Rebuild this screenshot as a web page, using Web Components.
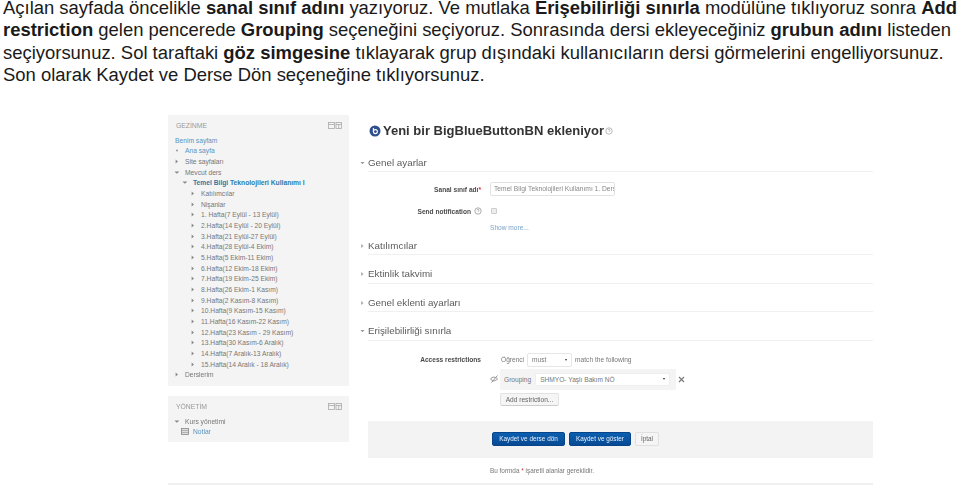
<!DOCTYPE html>
<html lang="tr">
<head>
<meta charset="utf-8">
<title>BigBlueButtonBN</title>
<style>
    html, body { margin: 0; padding: 0; background: #fff; overflow: hidden; }
    body { font-family: "Liberation Sans", Arial, sans-serif; width: 960px; height: 486px; }
</style>
</head>
<body>
<intro-text>Açılan sayfada öncelikle <b>sanal sınıf adını</b> yazıyoruz. Ve mutlaka <b>Erişebilirliği sınırla</b> modülüne tıklıyoruz sonra <b>Add</b><br><b>restriction</b> gelen pencerede <b>Grouping</b> seçeneğini seçiyoruz. Sonrasında dersi ekleyeceğiniz <b>grubun adını</b> listeden<br>seçiyorsunuz. Sol taraftaki <b>göz simgesine</b> tıklayarak grup dışındaki kullanıcıların dersi görmelerini engelliyorsunuz.<br>Son olarak Kaydet ve Derse Dön seçeneğine tıklıyorsunuz.</intro-text>

<moodle-shot>
    <div slot="side">
        <nav-block heading="GEZİNME" style="height:271px">
            <tree-row level="0" arrow="none" link>Benim sayfam</tree-row>
            <tree-row level="1" arrow="dot" link>Ana sayfa</tree-row>
            <tree-row level="1" arrow="right">Site sayfaları</tree-row>
            <tree-row level="1" arrow="down">Mevcut ders</tree-row>
            <tree-row level="2" arrow="down" link strong>Temel Bilgi Teknolojileri Kullanımı I</tree-row>
            <tree-row level="3" arrow="right">Katılımcılar</tree-row>
            <tree-row level="3" arrow="right">Nişanlar</tree-row>
            <tree-row level="3" arrow="right">1. Hafta(7 Eylül - 13 Eylül)</tree-row>
            <tree-row level="3" arrow="right">2.Hafta(14 Eylül - 20 Eylül)</tree-row>
            <tree-row level="3" arrow="right">3.Hafta(21 Eylül-27 Eylül)</tree-row>
            <tree-row level="3" arrow="right">4.Hafta(28 Eylül-4 Ekim)</tree-row>
            <tree-row level="3" arrow="right">5.Hafta(5 Ekim-11 Ekim)</tree-row>
            <tree-row level="3" arrow="right">6.Hafta(12 Ekim-18 Ekim)</tree-row>
            <tree-row level="3" arrow="right">7.Hafta(19 Ekim-25 Ekim)</tree-row>
            <tree-row level="3" arrow="right">8.Hafta(26 Ekim-1 Kasım)</tree-row>
            <tree-row level="3" arrow="right">9.Hafta(2 Kasım-8 Kasım)</tree-row>
            <tree-row level="3" arrow="right">10.Hafta(9 Kasım-15 Kasım)</tree-row>
            <tree-row level="3" arrow="right">11.Hafta(16 Kasım-22 Kasım)</tree-row>
            <tree-row level="3" arrow="right">12.Hafta(23 Kasım - 29 Kasım)</tree-row>
            <tree-row level="3" arrow="right">13.Hafta(30 Kasım-6 Aralık)</tree-row>
            <tree-row level="3" arrow="right">14.Hafta(7 Aralık-13 Aralık)</tree-row>
            <tree-row level="3" arrow="right">15.Hafta(14 Aralık - 18 Aralık)</tree-row>
            <tree-row level="1" arrow="right">Derslerim</tree-row>
        </nav-block>
        <nav-block heading="YÖNETİM" style="height:46px;margin-top:10px">
            <tree-row level="1" arrow="down">Kurs yönetimi</tree-row>
            <tree-row level="2" arrow="grid" link>Notlar</tree-row>
        </nav-block>
    </div>

    <page-title>Yeni bir BigBlueButtonBN ekleniyor</page-title>

    <form-section label="Genel ayarlar" open body="64">
        <field-row label="Sanal sınıf adı" required style="margin-top:10px;height:14px">
            <text-box style="width:125px">Temel Bilgi Teknolojileri Kullanımı 1. Ders</text-box>
        </field-row>
        <field-row label="Send notification" help style="margin-top:9px;height:12px">
            <check-mark></check-mark>
        </field-row>
        <field-row style="margin-top:6px;height:10px">
            <more-link>Show more...</more-link>
        </field-row>
    </form-section>
    <form-section label="Katılımcılar"></form-section>
    <form-section label="Ektinlik takvimi"></form-section>
    <form-section label="Genel eklenti ayarları"></form-section>
    <form-section label="Erişilebilirliği sınırla" open body="80">
        <field-row label="Access restrictions" style="margin-top:12px;height:14px">
            <access-rule></access-rule>
        </field-row>
    </form-section>

    <form-actions>
        <shot-button primary style="width:73px">Kaydet ve derse dön</shot-button>
        <shot-button primary style="width:62px">Kaydet ve göster</shot-button>
        <shot-button style="width:24px">İptal</shot-button>
    </form-actions>
    <form-note></form-note>
</moodle-shot>

<script>
    class IntroText extends HTMLElement {
        connectedCallback() {
            this.attachShadow({ mode: 'open' });
            this.shadowRoot.innerHTML = `
                <style>
                    :host {
                        display: block;
                        height: 90px;
                        margin-top: -3px;
                        padding-left: 3px;
                        font-size: 18.45px;
                        line-height: 22.4px;
                        color: #1a1a1a;
                        white-space: nowrap;
                    }
                </style>
                <slot></slot>
            `;
        }
    }

    class MoodleShot extends HTMLElement {
        connectedCallback() {
            this.attachShadow({ mode: 'open' });
            this.shadowRoot.innerHTML = `
                <style>
                    :host {
                        display: block;
                        width: 705px;
                        margin: 28px 0 0 168px;
                        filter: blur(0.45px);
                    }
                    .cols {
                        display: grid;
                        grid-template-columns: 181px 1fr;
                        column-gap: 11px;
                    }
                    .rule {
                        height: 2px;
                        background: #efefef;
                    }
                </style>
                <div class="cols">
                    <div><slot name="side"></slot></div>
                    <div><slot></slot></div>
                </div>
                <div class="rule"></div>
            `;
        }
    }

    class NavBlock extends HTMLElement {
        connectedCallback() {
            this.attachShadow({ mode: 'open' });
            this.shadowRoot.innerHTML = `
                <style>
                    :host {
                        display: block;
                        box-sizing: border-box;
                        padding-top: 5px;
                        background: #f4f4f4;
                    }
                    .head {
                        display: flex;
                        justify-content: space-between;
                        align-items: center;
                        height: 10px;
                        margin-bottom: 5px;
                        padding: 0 7px 0 8px;
                        font-size: 6.8px;
                        color: #999;
                    }
                    svg { display: block; }
                </style>
                <div class="head">
                    <span>${this.getAttribute('heading')}</span>
                    <svg width="14" height="7" viewBox="0 0 14 7" fill="none" stroke="#aaa" stroke-width="0.8">
                        <rect x="0.5" y="0.5" width="6" height="6"/><path d="M0.5 2.5h6"/>
                        <rect x="8" y="0.5" width="5.5" height="6"/><path d="M8 2.5h5.5M10.7 2.5v4"/>
                    </svg>
                </div>
                <slot></slot>
            `;
        }
    }

    class TreeRow extends HTMLElement {
        connectedCallback() {
            const level = Number(this.getAttribute('level'));
            const arrow = this.getAttribute('arrow');
            const icons = {
                none: '',
                dot: '<circle cx="4" cy="3.5" r="1" fill="#999"/>',
                right: '<path d="M2.6 1.4L5 3.5L2.6 5.6Z" fill="#888"/>',
                down: '<path d="M1.4 2.4H6.4L3.9 4.8Z" fill="#888"/>',
                grid: '<rect x="0.5" y="0.5" width="7" height="6" fill="#ddd" stroke="#888" stroke-width="0.8"/><path d="M0.5 2.5h7M0.5 4.5h7" stroke="#888" stroke-width="0.5"/>'
            };
            this.attachShadow({ mode: 'open' });
            this.shadowRoot.innerHTML = `
                <style>
                    :host {
                        display: flex;
                        align-items: center;
                        height: 10.67px;
                        padding-left: ${arrow === 'none' ? 7 : level * 8 - 3}px;
                        font-size: 6.7px;
                        color: #777;
                        white-space: nowrap;
                    }
                    :host([link]) { color: #5a93c0; }
                    :host([strong]) { font-weight: bold; color: #2f7aa8; }
                    svg { flex: none; width: 8px; height: 7px; margin-right: 4px; }
                </style>
                ${arrow === 'none' ? '' : `<svg viewBox="0 0 8 7">${icons[arrow]}</svg>`}
                <slot></slot>
            `;
        }
    }

    class PageTitle extends HTMLElement {
        connectedCallback() {
            this.attachShadow({ mode: 'open' });
            this.shadowRoot.innerHTML = `
                <style>
                    :host {
                        display: flex;
                        align-items: center;
                        height: 30px;
                        margin-bottom: 8px;
                        padding-left: 8px;
                        font-size: 13px;
                        font-weight: bold;
                        color: #333;
                        white-space: nowrap;
                    }
                    svg { flex: none; display: block; }
                </style>
                <svg width="15" height="13" viewBox="0 0 15 13">
                    <circle cx="7" cy="7" r="5.5" fill="#2f4f8f"/>
                    <circle cx="7.4" cy="7.6" r="2" fill="none" stroke="#fff" stroke-width="1.1"/>
                    <path d="M5.4 4v3.6" stroke="#fff" stroke-width="1.1"/>
                </svg>
                <slot></slot>
                <svg width="8" height="8" viewBox="0 0 8 8" style="margin:2px 0 0 1px" fill="none" stroke="#aaa" stroke-width="0.8">
                    <circle cx="4" cy="4" r="3.2"/><path d="M3 3.2a1 1 0 1 1 1.4 1L4 4.8"/>
                </svg>
            `;
        }
    }

    class FormSection extends HTMLElement {
        connectedCallback() {
            const open = this.hasAttribute('open');
            // collapsed rows are 19 + 9.5 tall, open ones 19 + body
            const total = open ? 19 + Number(this.getAttribute('body')) : 28.5;
            this.attachShadow({ mode: 'open' });
            this.shadowRoot.innerHTML = `
                <style>
                    :host {
                        display: block;
                        height: ${total}px;
                    }
                    .head {
                        display: flex;
                        align-items: center;
                        height: 19px;
                        font-size: 9.8px;
                        color: #5c5c5c;
                    }
                    .head svg { flex: none; width: 8px; height: 6px; }
                    .head span {
                        flex: 1;
                        align-self: stretch;
                        display: flex;
                        align-items: center;
                        border-bottom: 1px solid #f0f0f0;
                        box-sizing: border-box;
                    }
                </style>
                <div class="head">
                    <svg viewBox="0 0 8 6">
                        ${open ? '<path d="M0.5 2H4.5L2.5 4.2Z" fill="#999"/>' : '<path d="M1.2 1L3.6 3L1.2 5Z" fill="#aaa"/>'}
                    </svg>
                    <span>${this.getAttribute('label')}</span>
                </div>
                <slot></slot>
            `;
        }
    }

    class FieldRow extends HTMLElement {
        connectedCallback() {
            const label = this.getAttribute('label') || '';
            const req = this.hasAttribute('required') ? '<i>*</i>' : '';
            const help = this.hasAttribute('help')
                ? '<svg width="8" height="8" viewBox="0 0 8 8" fill="none" stroke="#888" stroke-width="0.7"><circle cx="4" cy="4" r="3.2"/><path d="M3 3.2a1 1 0 1 1 1.4 1L4 4.8"/></svg>'
                : '';
            this.attachShadow({ mode: 'open' });
            this.shadowRoot.innerHTML = `
                <style>
                    :host {
                        display: grid;
                        grid-template-columns: 113px 1fr;
                        grid-template-rows: 100%;
                        column-gap: 9px;
                        align-items: start;
                        padding-left: 8px;
                        font-size: 6.6px;
                        color: #555;
                    }
                    .lab {
                        display: flex;
                        justify-content: flex-end;
                        align-items: center;
                        gap: 2px;
                        height: 100%;
                        font-weight: bold;
                        white-space: nowrap;
                        color: #4a4a4a;
                    }
                    .lab.help { gap: 3px; margin-right: -1px; }
                    i { color: #c33; font-style: normal; }
                </style>
                <div class="lab ${help ? 'help' : ''}"><span>${label}${req}</span>${help}</div>
                <div><slot></slot></div>
            `;
        }
    }

    class TextBox extends HTMLElement {
        connectedCallback() {
            this.attachShadow({ mode: 'open' });
            this.shadowRoot.innerHTML = `
                <style>
                    :host {
                        display: block;
                        box-sizing: border-box;
                        height: 14px;
                        padding: 0 3px;
                        border: 1px solid #e2e2e2;
                        border-radius: 2px;
                        font-size: 6.7px;
                        line-height: 12px;
                        color: #888;
                        overflow: hidden;
                        white-space: nowrap;
                    }
                </style>
                <slot></slot>
            `;
        }
    }

    class CheckMark extends HTMLElement {
        connectedCallback() {
            this.attachShadow({ mode: 'open' });
            this.shadowRoot.innerHTML = `
                <style>
                    :host {
                        display: block;
                        box-sizing: border-box;
                        width: 6px;
                        height: 6px;
                        margin: 3px 0 0 1px;
                        background: #eee;
                        border: 1px solid #ccc;
                        border-radius: 1px;
                    }
                </style>
            `;
        }
    }

    class MoreLink extends HTMLElement {
        connectedCallback() {
            this.attachShadow({ mode: 'open' });
            this.shadowRoot.innerHTML = `
                <style>
                    :host {
                        display: block;
                        font-size: 6.6px;
                        line-height: 10px;
                        color: #7ba3c6;
                        white-space: nowrap;
                    }
                </style>
                <slot></slot>
            `;
        }
    }

    class AccessRule extends HTMLElement {
        connectedCallback() {
            this.attachShadow({ mode: 'open' });
            this.shadowRoot.innerHTML = `
                <style>
                    :host { display: block; font-size: 6.6px; color: #777; white-space: nowrap; }
                    .line { display: flex; align-items: center; height: 14px; margin-left: 11px; gap: 3px; }
                    .sel {
                        display: flex;
                        justify-content: space-between;
                        align-items: center;
                        box-sizing: border-box;
                        height: 14px;
                        padding: 0 4px;
                        background: #fff;
                        border: 1px solid #e6e6e6;
                        border-radius: 2px;
                        color: #777;
                    }
                    .sel::after {
                        content: "";
                        border: 1.6px solid transparent;
                        border-top: 2.2px solid #333;
                        border-bottom: 0;
                    }
                    .group { display: flex; align-items: center; margin-top: 2px; height: 21px; }
                    .group svg { flex: none; }
                    .box {
                        display: flex;
                        align-items: center;
                        width: 176px;
                        height: 21px;
                        box-sizing: border-box;
                        padding: 0 6px 0 4px;
                        gap: 4px;
                        background: #f4f4f4;
                    }
                    .box .sel { flex: 1; height: 13px; border-color: #eee; }
                    .x { margin-left: 2px; }
                    .add {
                        box-sizing: border-box;
                        width: 59px;
                        height: 13px;
                        margin: 3px 0 0 10px;
                        background: #f5f5f5;
                        border: 1px solid #e2e2e2;
                        border-bottom-color: #ccc;
                        border-radius: 2px;
                        font-size: 6.6px;
                        line-height: 11px;
                        text-align: center;
                        color: #666;
                    }
                </style>
                <div class="line">
                    <span>Öğrenci</span>
                    <span class="sel" style="width:45px">must</span>
                    <span>match the following</span>
                </div>
                <div class="group">
                    <svg width="10" height="8" viewBox="0 0 10 8" fill="none" stroke="#888" stroke-width="0.9">
                        <path d="M0.5 4C2.5 1.5 5 1.5 7.5 4C5 6.5 2.5 6.5 0.5 4Z"/><path d="M1.5 7.5L7.5 0.5"/>
                    </svg>
                    <div class="box">
                        <span>Grouping</span>
                        <span class="sel">SHMYO- Yaşlı Bakım NÖ</span>
                    </div>
                    <svg class="x" width="7" height="7" viewBox="0 0 7 7" stroke="#777" stroke-width="1.1">
                        <path d="M1 1L6 6M6 1L1 6"/>
                    </svg>
                </div>
                <div class="add">Add restriction...</div>
            `;
        }
    }

    class FormActions extends HTMLElement {
        connectedCallback() {
            this.attachShadow({ mode: 'open' });
            this.shadowRoot.innerHTML = `
                <style>
                    :host {
                        display: flex;
                        align-items: center;
                        gap: 4px;
                        height: 37px;
                        margin-left: 8px;
                        padding-left: 124px;
                        background: #f3f3f3;
                    }
                </style>
                <slot></slot>
            `;
        }
    }

    class ShotButton extends HTMLElement {
        connectedCallback() {
            this.attachShadow({ mode: 'open' });
            this.shadowRoot.innerHTML = `
                <style>
                    :host {
                        display: block;
                        box-sizing: border-box;
                        height: 14px;
                        background: #f5f5f5;
                        border: 1px solid #e0e0e0;
                        border-radius: 2px;
                        font-size: 6.4px;
                        line-height: 12px;
                        text-align: center;
                        color: #666;
                        white-space: nowrap;
                    }
                    :host([primary]) {
                        background: linear-gradient(#0b5fb0, #084a94);
                        border-color: #07448a;
                        color: #e8f0fa;
                    }
                </style>
                <slot></slot>
            `;
        }
    }

    class FormNote extends HTMLElement {
        connectedCallback() {
            this.attachShadow({ mode: 'open' });
            this.shadowRoot.innerHTML = `
                <style>
                    :host {
                        display: flex;
                        align-items: center;
                        height: 25px;
                        padding-left: 130px;
                        font-size: 6.4px;
                        color: #777;
                    }
                    i { color: #c33; font-style: normal; }
                </style>
                <span>Bu formda <i>*</i> işaretli alanlar gereklidir.</span>
            `;
        }
    }

    customElements.define('intro-text', IntroText);
    customElements.define('moodle-shot', MoodleShot);
    customElements.define('nav-block', NavBlock);
    customElements.define('tree-row', TreeRow);
    customElements.define('page-title', PageTitle);
    customElements.define('form-section', FormSection);
    customElements.define('field-row', FieldRow);
    customElements.define('text-box', TextBox);
    customElements.define('check-mark', CheckMark);
    customElements.define('more-link', MoreLink);
    customElements.define('access-rule', AccessRule);
    customElements.define('form-actions', FormActions);
    customElements.define('shot-button', ShotButton);
    customElements.define('form-note', FormNote);
</script>
</body>
</html>
